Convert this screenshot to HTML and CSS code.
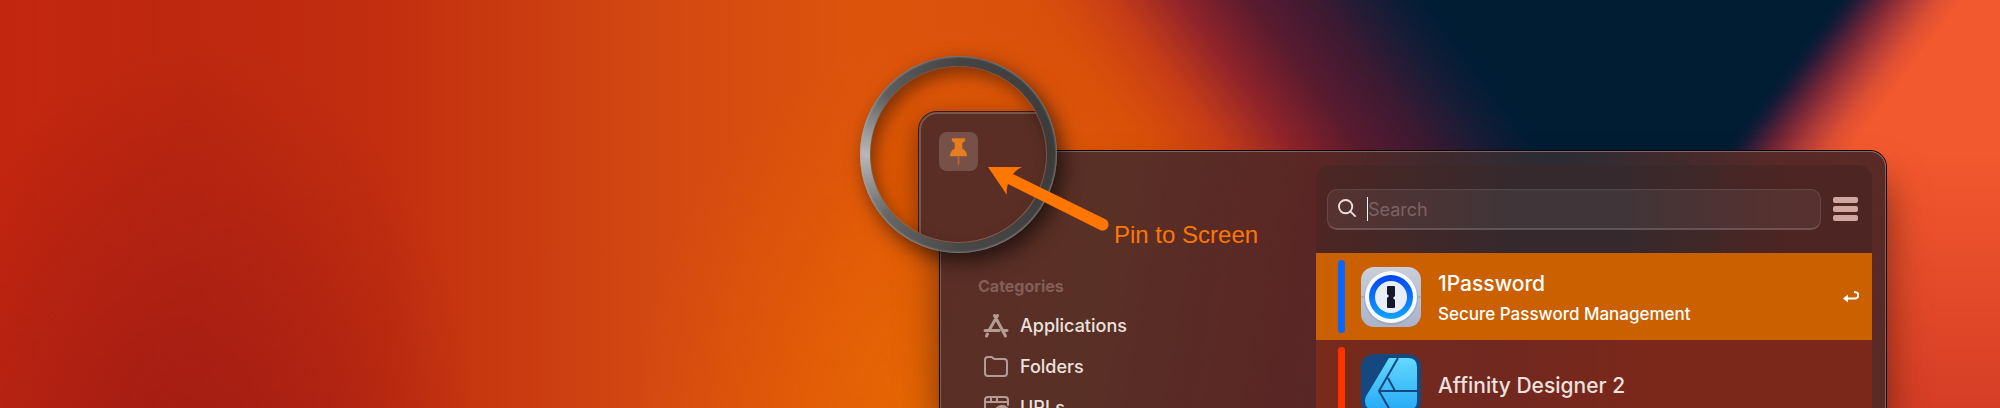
FILE: index.html
```html
<!DOCTYPE html>
<html lang="en">
<head>
  <meta charset="UTF-8">
  <meta name="viewport" content="width=device-width, initial-scale=1.0">
  <title>Pin to Screen</title>
  <link rel="stylesheet" href="styles.css">
</head>
<body>
  <svg class="wallpaper" viewBox="0 0 2000 408" preserveAspectRatio="none" aria-hidden="true">
    <defs>
      <linearGradient id="wall-base" gradientUnits="userSpaceOnUse" x1="0" y1="0" x2="1200" y2="0">
        <stop offset="0" stop-color="#c3260f"/>
        <stop offset="0.16" stop-color="#bd280f"/>
        <stop offset="0.32" stop-color="#c22e0f"/>
        <stop offset="0.42" stop-color="#c93a10"/>
        <stop offset="0.54" stop-color="#d24812"/>
        <stop offset="0.72" stop-color="#dc540c"/>
        <stop offset="1" stop-color="#d54d0a"/>
      </linearGradient>
      <radialGradient id="wall-dark" gradientUnits="userSpaceOnUse" cx="0" cy="0" r="1" gradientTransform="translate(190 520) scale(300 480)">
        <stop offset="0" stop-color="#9a1815" stop-opacity="0.8"/>
        <stop offset="0.4" stop-color="#9a1815" stop-opacity="0.55"/>
        <stop offset="1" stop-color="#9a1815" stop-opacity="0"/>
      </radialGradient>
      <radialGradient id="wall-glow" gradientUnits="userSpaceOnUse" cx="0" cy="0" r="1" gradientTransform="translate(980 440) scale(350 420)">
        <stop offset="0" stop-color="#ec6e00" stop-opacity="0.9"/>
        <stop offset="0.4" stop-color="#ea6a00" stop-opacity="0.6"/>
        <stop offset="1" stop-color="#e86000" stop-opacity="0"/>
      </radialGradient>
      <linearGradient id="wall-blue" gradientUnits="userSpaceOnUse" x1="1030" y1="0" x2="1299" y2="-202">
        <stop offset="0" stop-color="#d24510" stop-opacity="0"/>
        <stop offset="0.2" stop-color="#c63c18"/>
        <stop offset="0.36" stop-color="#8f232a"/>
        <stop offset="0.52" stop-color="#5a1b2f"/>
        <stop offset="0.69" stop-color="#3a1a32"/>
        <stop offset="0.81" stop-color="#1b1c36"/>
        <stop offset="0.94" stop-color="#001d35"/>
        <stop offset="1" stop-color="#001d33"/>
      </linearGradient>
      <linearGradient id="wall-right" gradientUnits="userSpaceOnUse" x1="1836" y1="0" x2="1917" y2="61">
        <stop offset="0" stop-color="#0c1b38" stop-opacity="0"/>
        <stop offset="0.17" stop-color="#261b38"/>
        <stop offset="0.36" stop-color="#6b2436"/>
        <stop offset="0.6" stop-color="#b03c38"/>
        <stop offset="0.8" stop-color="#dc4f33"/>
        <stop offset="1" stop-color="#f3592e"/>
      </linearGradient>
      <linearGradient id="wall-fade" x1="0" y1="0" x2="0" y2="1">
        <stop offset="0" stop-color="#d63e26" stop-opacity="0"/>
        <stop offset="1" stop-color="#d63e26"/>
      </linearGradient>
    </defs>
    <rect width="2000" height="408" fill="url(#wall-base)"/>
    <rect width="2000" height="408" fill="url(#wall-dark)"/>
    <rect width="2000" height="408" fill="url(#wall-glow)"/>
    <rect width="2000" height="408" fill="url(#wall-blue)"/>
    <rect width="2000" height="408" fill="url(#wall-right)"/>
    <rect x="1700" y="150" width="300" height="258" fill="url(#wall-fade)"/>
  </svg>

  <main class="window">
    <nav class="sidebar">
      <h2>Categories</h2>
      <a href="#applications">
        <svg viewBox="0 0 24 24"><path d="M13.500 1.500L5 16.500M10.500 1.500L21.500 22M3.500 20L2.500 22M1 16.500H15M19 16.500H23"/></svg>
        Applications
      </a>
      <a href="#folders">
        <svg class="thin" viewBox="0 0 24 24"><path d="M1 5C1 3 2 2 4 2H7C9 2 9 4 11 4H20C22 4 23 5 23 7V18C23 20 22 21 20 21H4C2 21 1 20 1 18Z"/></svg>
        Folders
      </a>
      <a href="#urls">
        <svg class="thin" viewBox="0 0 24 24"><path d="M9 22H4C2 22 1 21 1 19V4C1 2 2 1 4 1H21C23 1 24 2 24 4V9M1 6H24M7 1V6M13 1V6"/><circle cx="18" cy="17" r="7"/><ellipse cx="18" cy="17" rx="3" ry="7"/><path d="M18 10V24M11 15H25M11 19H25"/></svg>
        URLs
      </a>
    </nav>

    <section class="panel">
      <form class="toolbar">
        <label class="search">
          <svg viewBox="0 0 20 20"><circle cx="8" cy="8" r="7"/><path d="M13 13L18 18"/></svg>
          <span class="caret"></span>
          <input type="search" placeholder="Search" aria-label="Search">
        </label>
        <button type="button" class="menu" aria-label="Menu"><span></span><span></span><span></span></button>
      </form>
      <ul class="results">
        <li class="selected">
          <span class="tag blue"></span>
          <svg class="app-icon" viewBox="0 0 60 60">
            <defs>
              <linearGradient id="op-bg" x1="0" y1="0" x2="0" y2="1"><stop offset="0" stop-color="#c9ced9"/><stop offset="1" stop-color="#a9b3ca"/></linearGradient>
              <linearGradient id="op-ring" x1="0" y1="0" x2="0" y2="1"><stop offset="0" stop-color="#0044f0"/><stop offset="1" stop-color="#11a4ff"/></linearGradient>
            </defs>
            <rect width="60" height="60" rx="13" fill="url(#op-bg)"/>
            <path d="M0 30H60" stroke="#929db3"/>
            <circle cx="30" cy="31" r="27" fill="#8e9ab5" opacity="0.5"/>
            <circle cx="30" cy="30" r="26" fill="#f8faff"/>
            <circle cx="30" cy="30" r="22" fill="url(#op-ring)"/>
            <circle cx="30" cy="30" r="16" fill="#e8edf7"/>
            <path d="M27 19H33Q34 19 34 20V29L32 31L34 33V40Q34 41 33 41H27Q26 41 26 40V31L28 29L26 27V20Q26 19 27 19Z" fill="#15182b"/>
          </svg>
          <div class="name"><strong>1Password</strong><small>Secure Password Management</small></div>
          <svg class="enter" viewBox="0 0 16 12"><path d="M11 1C17 1 16 7.500 12 7.500H3"/><path class="head" d="M0 7.500L5 3.500V11.500Z"/></svg>
        </li>
        <li>
          <span class="tag red"></span>
          <svg class="app-icon" viewBox="0 0 60 60">
            <defs><linearGradient id="af" x1="0" y1="0" x2="0" y2="1"><stop offset="0" stop-color="#63d8ff"/><stop offset="1" stop-color="#27aaf5"/></linearGradient></defs>
            <rect width="60" height="60" rx="13" fill="#14487f"/>
            <path d="M28 4H47Q56 4 56 13V47Q56 56 47 56H14Q4 56 4 47C4 44 5 42 7 39Z" fill="url(#af)"/>
            <path d="M37 4L18 37L29 56M18 37H56M27 24L34 37" fill="none" stroke="#14487f" stroke-width="2"/>
          </svg>
          <div class="name"><strong>Affinity Designer 2</strong></div>
        </li>
      </ul>
    </section>
  </main>

  <div class="lens">
    <div class="lens-view">
      <div class="lens-window">
        <button type="button" aria-label="Pin to Screen">
          <svg viewBox="0 0 20 30"><path d="M3 1H17V4L14 6V12C17 13 19 16 19 20H1C1 16 3 13 6 12V6L3 4Z"/><path class="needle" d="M9 20H11V28L10 30L9 28Z"/></svg>
        </button>
      </div>
    </div>
  </div>

  <div class="callout">
    <svg viewBox="0 0 122 64" aria-hidden="true"><path d="M0 0H34Q28 3 25 7L117 52A6 6 0 0 1 112 63L20 17Q18 22 19 28Z"/></svg>
    <span>Pin to Screen</span>
  </div>
</body>
</html>
```
FILE: styles.css
```css
* {
  box-sizing: border-box;
}

body {
  margin: 0;
  height: 100vh;
  padding: 151px 114px 0 940px;
  position: relative;
  overflow: hidden;
  background: #d9500a;
  font-family: Inter, "Liberation Sans", sans-serif;
  color: #ebe1df;
}

.wallpaper {
  position: absolute;
  left: 0;
  top: 0;
  width: 100%;
  height: 100%;
}

.window {
  position: relative;
  display: flex;
  height: 100%;
  border: 1px solid #806464;
  border-bottom: none;
  border-radius: 16px 16px 0 0;
  background:
    radial-gradient(ellipse 230px 130px at 610px 0, #292c34, rgba(41, 44, 52, 0)),
    linear-gradient(100deg, #5a2e25 0%, #593026 18%, #5a2625 38%, #55282a 60%, #5a2a25 100%);
  box-shadow: 0 0 0 1px #0d0506, 0 30px 40px rgba(0, 0, 0, 0.5);
}

/* Sidebar */
.sidebar {
  width: 375px;
  height: 100%;
  padding: 124px 0 0 37px;
  overflow: hidden;
}

.sidebar h2 {
  margin: 0 0 9px;
  font-size: 16px;
  line-height: 20px;
  font-weight: 700;
  color: #845f58;
}

.sidebar a {
  display: flex;
  align-items: center;
  gap: 12px;
  height: 41px;
  padding-left: 6px;
  font-size: 18px;
  font-weight: 500;
  color: inherit;
  text-decoration: none;
}

.sidebar svg {
  width: 24px;
  height: 24px;
  overflow: visible;
  fill: none;
  stroke: #b39c96;
  stroke-width: 3;
  stroke-linecap: round;
}

.sidebar svg.thin {
  stroke-width: 2;
}

/* Results panel */
.panel {
  flex: 1;
  margin: 13px 13px 0 0;
  border-radius: 14px 14px 0 0;
  overflow: hidden;
  background: linear-gradient(90deg, #4d2623, #35292d 35%, #35292d 55%, #4d2522 85%);
}

.toolbar {
  display: flex;
  align-items: center;
  gap: 12px;
  height: 88px;
  padding: 0 14px 0 11px;
}

.search {
  flex: 1;
  display: flex;
  align-items: center;
  height: 41px;
  padding: 0 10px;
  border: 1px solid rgba(255, 255, 255, 0.1);
  border-bottom: 2px solid rgba(255, 255, 255, 0.16);
  border-radius: 10px;
  background: rgba(255, 255, 255, 0.06);
}

.search svg {
  width: 19px;
  height: 19px;
  fill: none;
  stroke: #ebdfdc;
  stroke-width: 2;
  stroke-linecap: round;
}

.caret {
  width: 1px;
  height: 24px;
  margin-left: 10px;
  background: #fff;
}

.search input {
  flex: 1;
  min-width: 0;
  padding: 2px 0 0;
  border: none;
  outline: none;
  background: none;
  font: 18px Inter, sans-serif;
  color: #fff;
}

.search input::placeholder {
  color: #7c6262;
  opacity: 1;
}

.menu {
  display: grid;
  gap: 3px;
  padding: 0;
  border: none;
  background: none;
}

.menu span {
  width: 25px;
  height: 6px;
  border-radius: 2px;
  background: #d2a6a1;
}

.results {
  margin: 0;
  padding: 0;
  list-style: none;
}

.results li {
  display: flex;
  align-items: center;
  height: 87px;
  padding: 0 13px 0 22px;
  background: linear-gradient(90deg, #782b1b, #702820 30%, #7b281a 60%);
}

.results li.selected {
  background: #ca6000;
  color: #fff;
}

.tag {
  width: 7px;
  height: 73px;
  border-radius: 4px;
}

.tag.blue {
  background: #0866ff;
}

.tag.red {
  background: #ff3300;
}

.app-icon {
  width: 60px;
  height: 60px;
  margin: 0 17px 0 16px;
}

.name {
  flex: 1;
  padding-top: 4px;
}

.name strong,
.name small {
  display: block;
  font-size: 21px;
  line-height: 30px;
  font-weight: 500;
}

.name small {
  font-size: 17px;
}

.enter {
  width: 16px;
  height: 12px;
  fill: none;
  stroke: #fff;
  stroke-width: 2;
}

.enter .head {
  fill: #fff;
  stroke: none;
}

/* Magnifier over the window corner */
.lens {
  position: absolute;
  left: 860px;
  top: 56px;
  width: 197px;
  height: 197px;
  padding: 10px;
  border-radius: 50%;
  background: conic-gradient(from 270deg, #b8b8b8, #5d5d5d 40deg, #444 90deg, #3a3a3a 180deg, #484848 270deg, #666 320deg, #b8b8b8);
  box-shadow: inset 0 0 2px 1px rgba(170, 170, 170, 0.6), 6px 8px 20px rgba(0, 0, 0, 0.6);
}

.lens-view {
  position: relative;
  height: 100%;
  padding: 46px 0 0 49px;
  border-radius: 50%;
  overflow: hidden;
  background: linear-gradient(#db5408, #d85700);
}

.lens-view::after {
  content: "";
  position: absolute;
  inset: 0;
  border-radius: 50%;
  box-shadow: inset 5px 8px 16px rgba(0, 0, 0, 0.4), inset 0 0 0 1px rgba(150, 140, 135, 0.6);
  pointer-events: none;
}

.lens-window {
  width: 200px;
  height: 200px;
  padding: 18px;
  border: 2px solid #77584f;
  border-radius: 18px;
  background: #5a2e25;
  box-shadow: 0 0 0 1px #3c1b10, 0 8px 24px rgba(60, 20, 0, 0.6);
}

.lens-window button {
  display: grid;
  place-items: center;
  width: 39px;
  height: 39px;
  padding: 0;
  border: none;
  border-radius: 8px;
  background: #775048;
}

.lens-window svg {
  width: 19px;
  height: 29px;
  fill: #e87d20;
}

.lens-window .needle {
  fill: #b8642b;
}

/* Arrow and its label */
.callout {
  position: absolute;
  left: 988px;
  top: 167px;
  display: flex;
  align-items: flex-start;
  gap: 4px;
  font: 24px/28px "Liberation Sans", Arial, sans-serif;
  color: #ff7700;
}

.callout svg {
  width: 122px;
  height: 64px;
  fill: #ff7700;
}

.callout span {
  padding-top: 54px;
}
```
